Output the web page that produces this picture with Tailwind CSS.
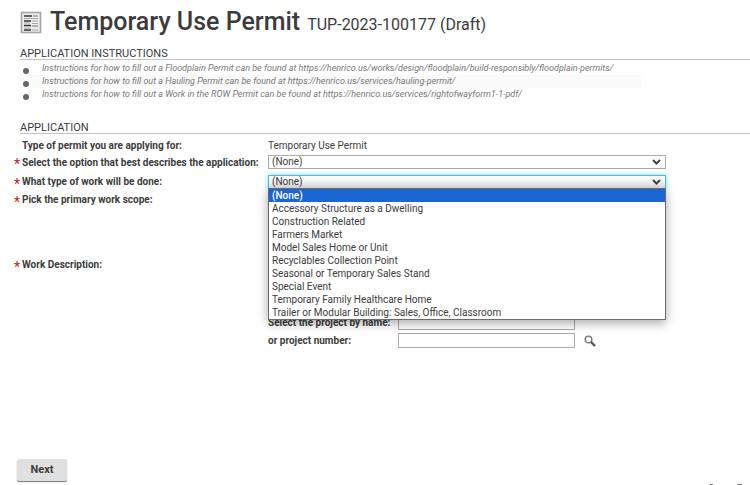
<!DOCTYPE html>
<html lang="en">
<head>
  <meta charset="UTF-8">
  <title>Temporary Use Permit</title>
  <meta name="viewport" content="width=device-width, initial-scale=1">
  <script src="https://cdn.jsdelivr.net/npm/@tailwindcss/browser@4"></script>
</head>
<body class="bg-white font-['Roboto','Liberation_Sans',sans-serif] text-[#3c3c3c]">
<div class="flex flex-col min-h-screen overflow-hidden">

  <!-- Page title -->
  <header class="flex items-center gap-2 pl-5 pt-[10px] h-9">
    <svg class="w-[22px] h-6 shrink-0" viewBox="0 0 22 24" fill="none">
      <rect x="1.500" y="1.500" width="19" height="20" fill="#ececec" stroke="#a6a6a6" stroke-width="1.6"/>
      <path d="M4 5h8M4 10h7M4 14.500h7M4 19h7" stroke="#333" stroke-width="1.300"/>
      <path d="M4 7.500h14M4 12h6M4 17h7M12 10h6M12 12.500h6M12 19h6" stroke="#aaa"/>
      <path d="M13 5h5M12 15h6" stroke="#777"/>
    </svg>
    <h1 class="flex items-baseline gap-[7px] whitespace-nowrap">
      <span class="text-[25px] leading-7 font-medium">Temporary Use Permit</span>
      <span class="text-base leading-7">TUP-2023-100177 (Draft)</span>
    </h1>
  </header>

  <main class="flex-1">
    <!-- Instructions -->
    <section class="pl-5 pt-3">
      <h2 class="text-[11px] leading-[11px] border-b border-[#c4c4c4]">APPLICATION INSTRUCTIONS</h2>
      <ul class="pt-[2px] w-fit pr-7 text-[9px] leading-[13px] italic text-[#777]">
        <li class="flex items-center gap-[13px] h-[13px] pl-[3px] whitespace-nowrap"><span class="w-[6px] h-[6px] mt-1 rounded-full bg-[#666]"></span>Instructions for how to fill out a Floodplain Permit can be found at https://henrico.us/works/design/floodplain/build-responsibly/floodplain-permits/</li>
        <li class="flex items-center gap-[13px] h-[13px] pl-[3px] -mr-7 whitespace-nowrap bg-[#fafafa]"><span class="w-[6px] h-[6px] mt-1 rounded-full bg-[#666]"></span>Instructions for how to fill out a Hauling Permit can be found at https://henrico.us/services/hauling-permit/</li>
        <li class="flex items-center gap-[13px] h-[13px] pl-[3px] whitespace-nowrap"><span class="w-[6px] h-[6px] mt-1 rounded-full bg-[#666]"></span>Instructions for how to fill out a Work in the ROW Permit can be found at https://henrico.us/services/rightofwayform1-1-pdf/</li>
      </ul>
    </section>

    <!-- Application -->
    <section class="pl-5 pt-[21px]">
      <h2 class="text-[11px] leading-[11px] border-b border-[#c4c4c4]">APPLICATION</h2>
    </section>
    <form class="pl-[14px] text-[10px] leading-[14px]">
      <div class="flex h-[21px] pt-[5px]">
        <div class="w-[254px] pl-2 font-bold">Type of permit you are applying for:</div>
        <div>Temporary Use Permit</div>
      </div>
      <div class="flex h-5">
        <label for="option" class="w-[254px] h-4 flex font-bold leading-4 whitespace-nowrap"><span class="w-2 text-[14px] leading-[18px] font-normal text-[#b3261e]">*</span>Select the option that best describes the application:</label>
        <div class="relative w-[398px] h-[14px]">
          <select id="option" class="appearance-none block w-full h-full px-[3px] leading-3 border border-[#aaa] bg-white">
            <option>(None)</option>
          </select>
          <svg class="absolute right-[5px] top-1 w-[9px] h-[6px] pointer-events-none" viewBox="0 0 9 6" fill="none"><path d="M1 1l3.500 3.500L8 1" stroke="#444" stroke-width="2"/></svg>
        </div>
      </div>
      <div class="flex h-[18px]">
        <label for="work" class="w-[254px] h-4 flex font-bold"><span class="w-2 text-[14px] leading-[18px] font-normal text-[#b3261e]">*</span>What type of work will be done:</label>
        <div class="relative w-[398px] h-[14px]">
          <select id="work" class="appearance-none block w-full h-full px-[3px] leading-3 border border-[#4cbde0] bg-linear-to-b from-white to-[#e4e4e4] shadow-[0_0_5px_#6fd3f5]">
            <option>(None)</option>
          </select>
          <svg class="absolute right-[5px] top-1 w-[9px] h-[6px] pointer-events-none" viewBox="0 0 9 6" fill="none"><path d="M1 1l3.500 3.500L8 1" stroke="#444" stroke-width="2"/></svg>
          <!-- Open list of work types -->
          <ul role="listbox" class="absolute z-10 left-0 top-[13px] w-full border border-[#6b6b6b] bg-white leading-[13px] shadow-[0_3px_10px_rgba(0,0,0,0.35)]">
            <li role="option" aria-selected="true" class="px-[3px] bg-[#1a66d2] text-white font-medium">(None)</li>
            <li role="option" class="px-[3px]">Accessory Structure as a Dwelling</li>
            <li role="option" class="px-[3px]">Construction Related</li>
            <li role="option" class="px-[3px]">Farmers Market</li>
            <li role="option" class="px-[3px]">Model Sales Home or Unit</li>
            <li role="option" class="px-[3px]">Recyclables Collection Point</li>
            <li role="option" class="px-[3px]">Seasonal or Temporary Sales Stand</li>
            <li role="option" class="px-[3px]">Special Event</li>
            <li role="option" class="px-[3px]">Temporary Family Healthcare Home</li>
            <li role="option" class="px-[3px]">Trailer or Modular Building: Sales, Office, Classroom</li>
          </ul>
        </div>
      </div>
      <div class="flex h-[65px]">
        <div class="h-4 flex font-bold"><span class="w-2 text-[14px] leading-[18px] font-normal text-[#b3261e]">*</span>Pick the primary work scope:</div>
      </div>
      <div class="flex h-[57px]">
        <div class="h-4 flex font-bold"><span class="w-2 text-[14px] leading-[18px] font-normal text-[#b3261e]">*</span>Work Description:</div>
      </div>
      <div class="pl-[254px] flex flex-col gap-[3px]">
        <div class="flex items-center">
          <label for="pname" class="w-[130px] font-bold whitespace-nowrap">Select the project by name:</label>
          <input id="pname" type="text" class="w-[177px] h-[15px] border border-[#aaa] px-1">
        </div>
        <div class="flex items-center">
          <label for="pnum" class="w-[130px] font-bold whitespace-nowrap">or project number:</label>
          <input id="pnum" type="text" class="w-[177px] h-[15px] border border-[#aaa] px-1">
          <button type="button" aria-label="Search" class="ml-[9px]">
            <svg class="block w-3 h-3" viewBox="0 0 12 12" fill="none"><circle cx="4.500" cy="4.500" r="3.300" stroke="#808080" stroke-width="1.500"/><path d="M7 7l4 4" stroke="#555" stroke-width="2.400"/></svg>
          </button>
        </div>
      </div>
    </form>
  </main>

  <footer class="flex items-end justify-between">
    <button type="button" class="ml-[17px] mb-1 w-[50px] h-[22px] rounded-[2px] bg-[#e0e0e0] text-[11px] leading-4 font-bold shadow-[0_1px_1px_#777]">Next</button>
    <div class="flex gap-6 pr-2">
      <span class="w-[3px] h-px bg-[#777]"></span>
      <span class="w-[5px] h-px bg-[#777]"></span>
    </div>
  </footer>
</div>
</body>
</html>
